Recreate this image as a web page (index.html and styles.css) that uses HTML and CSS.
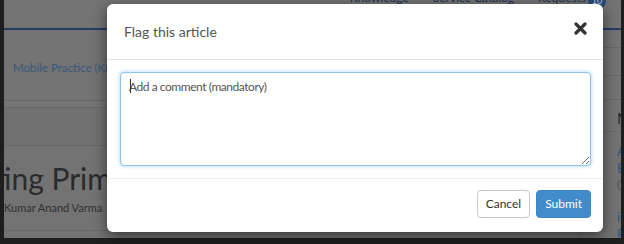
FILE: index.html
```html
<!DOCTYPE html>
<html lang="en">
<head>
<meta charset="utf-8">
<title>Flag this article</title>
<link rel="stylesheet" href="styles.css">
</head>
<body>
<div class="page">
  <header class="topbar">
    <nav class="menu">
      <span class="menu-item">Knowledge</span>
      <span class="menu-item">Service Catalog</span>
      <span class="menu-item">Requests <span class="badge">10</span></span>
    </nav>
  </header>
  <div class="layout">
    <div class="main">
      <div class="crumbs"><a class="crumb-link">Mobile Practice (Knowledge)</a></div>
      <div class="band"></div>
      <div class="toolbar"></div>
      <section class="article-head">
        <h1 class="article-title">Getting Primer for Mobile</h1>
        <p class="author">Kumar Anand Varma</p>
      </section>
    </div>
    <aside class="side">
      <div class="side-row r1"></div>
      <div class="side-row r2"></div>
      <div class="side-row r3"></div>
      <div class="side-title">M</div>
      <ul class="side-list">
        <li><a class="side-link">A</a><a class="side-link">B</a><span class="side-meta">0</span></li>
        <li class="second"><a class="side-link">iC</a><a class="side-link">B</a></li>
      </ul>
    </aside>
  </div>
</div>

<div class="modal" role="dialog" aria-labelledby="flag-title">
  <div class="modal-header">
    <h4 class="modal-title" id="flag-title">Flag this article</h4>
    <button class="close" aria-label="Close">
      <svg width="13" height="13" viewBox="0 0 13 13" aria-hidden="true">
        <path d="M2 2 L11 11 M11 2 L2 11" stroke="#333" stroke-width="3.2" stroke-linecap="round" fill="none"/>
      </svg>
    </button>
  </div>
  <div class="modal-body">
    <textarea class="comment" placeholder="Add a comment (mandatory)"></textarea>
    <span class="caret"></span>
  </div>
  <div class="modal-footer">
    <button class="btn btn-default">Cancel</button>
    <button class="btn btn-primary">Submit</button>
  </div>
</div>
</body>
</html>
```

FILE: styles.css
```css
html, body {
  margin: 0;
  padding: 0;
}
body {
  width: 624px;
  height: 244px;
  overflow: hidden;
  background: #1e1e1e;
  position: relative;
  font-family: Lato, "Open Sans", sans-serif;
}
.page {
  margin-left: 4px;
  width: 617px;
  height: 238px;
  background: #737373;
  overflow: hidden;
}
.topbar {
  height: 28px;
  border-bottom: 2px solid #233d63;
  display: flex;
}
.menu {
  margin-left: auto;
  margin-right: 15px;
  margin-top: -11px;
  display: flex;
  gap: 24px;
  height: 18px;
  font-size: 12px;
  line-height: 16px;
  color: #1c3150;
}
.menu-item {
  display: flex;
  align-items: center;
  gap: 2px;
}
.badge {
  display: inline-block;
  width: 18px;
  height: 18px;
  border-radius: 50%;
  background: #274a78;
  color: #c9d4e2;
  font-size: 9px;
  text-align: center;
  line-height: 18px;
  margin-top: 6px;
}
.layout {
  display: flex;
}
.main {
  flex: 1;
}
.crumbs {
  height: 40px;
  padding: 30px 0 0 9px;
  border-bottom: 1px solid #676767;
  font-size: 11.5px;
  line-height: 16px;
}
.crumb-link {
  color: #38587f;
  white-space: nowrap;
}
.band {
  height: 6px;
  border-bottom: 1px solid #686868;
  background: #757575;
}
.toolbar {
  height: 37px;
  border-bottom: 1px solid #676767;
  background: #717171;
}
.article-head {
  height: 84px;
  border-bottom: 1px solid #686868;
  margin-left: -58px;
}
.article-title {
  margin: 0;
  padding-top: 14px;
  font-size: 30px;
  line-height: 36px;
  font-weight: 400;
  color: #2b2b2b;
  white-space: nowrap;
}
.author {
  margin: 4px 0 0 58px;
  font-size: 11px;
  line-height: 16px;
  color: #2f2f2f;
  white-space: nowrap;
}
.side {
  width: 41px;
  flex: none;
  margin-top: -11px;
  border-left: 1px solid #6a6a6a;
}
.side-row {
  border-bottom: 1px solid #666;
}
.r1 { height: 28px; }
.r2 { height: 27px; }
.r3 { height: 23px; }
.side-title {
  padding: 9px 0 0 37px;
  height: 22px;
  font-size: 15px;
  line-height: 18px;
  color: #2a2a2a;
  border-bottom: 1px solid #6a6a6a;
}
.side-list {
  list-style: none;
  margin: 0;
  padding: 0 0 0 37px;
  font-size: 13px;
  line-height: 17px;
}
.side-list li {
  display: flex;
  flex-direction: column;
  padding-top: 11px;
}
.side-list li.second {
  padding-top: 15px;
}
.side-link {
  color: #2f5383;
}
.side-meta {
  color: #555;
}

/* modal */
.modal {
  position: absolute;
  left: 107px;
  top: 4px;
  width: 496px;
  height: 228px;
  background: #fff;
  border-radius: 6px;
  box-shadow: 0 4px 14px rgba(0, 0, 0, 0.55);
  display: flex;
  flex-direction: column;
}
.modal-header {
  height: 55px;
  padding: 0 16px 0 17px;
  border-bottom: 1px solid #e6e6e6;
  display: flex;
  align-items: center;
  justify-content: space-between;
}
.modal-title {
  margin: 0;
  font-size: 14px;
  font-weight: 400;
  color: #555;
}
.close {
  border: 0;
  background: none;
  padding: 0;
  width: 13px;
  height: 13px;
  display: flex;
  margin-top: -6px;
}
.modal-body {
  padding: 12px 12px 12px 13px;
  position: relative;
}
.comment {
  display: block;
  box-sizing: border-box;
  width: 471px;
  height: 94px;
  margin: 0;
  padding: 6px 8px;
  border: 1px solid #8dc3ee;
  border-radius: 4px;
  box-shadow: 0 0 4px rgba(102, 175, 233, 0.55);
  outline: none;
  font-family: Lato, "Open Sans", sans-serif;
  font-size: 12px;
  letter-spacing: -0.45px;
  line-height: 16px;
  color: #333;
}
.comment::placeholder {
  color: #555;
  opacity: 1;
}
.caret {
  position: absolute;
  left: 23px;
  top: 19px;
  width: 1px;
  height: 14px;
  background: #333;
}
.modal-footer {
  border-top: 1px solid #efefef;
  padding: 11px 12px 13px;
  display: flex;
  justify-content: flex-end;
  gap: 6px;
}
.btn {
  height: 28px;
  box-sizing: border-box;
  padding: 0 8px;
  border-radius: 4px;
  font-family: Lato, "Open Sans", sans-serif;
  font-size: 12px;
  line-height: 26px;
}
.btn-default {
  background: #fff;
  border: 1px solid #c8c8c8;
  color: #333;
}
.btn-primary {
  background: #428bca;
  border: 1px solid #3d86c6;
  color: #fff;
}
```
